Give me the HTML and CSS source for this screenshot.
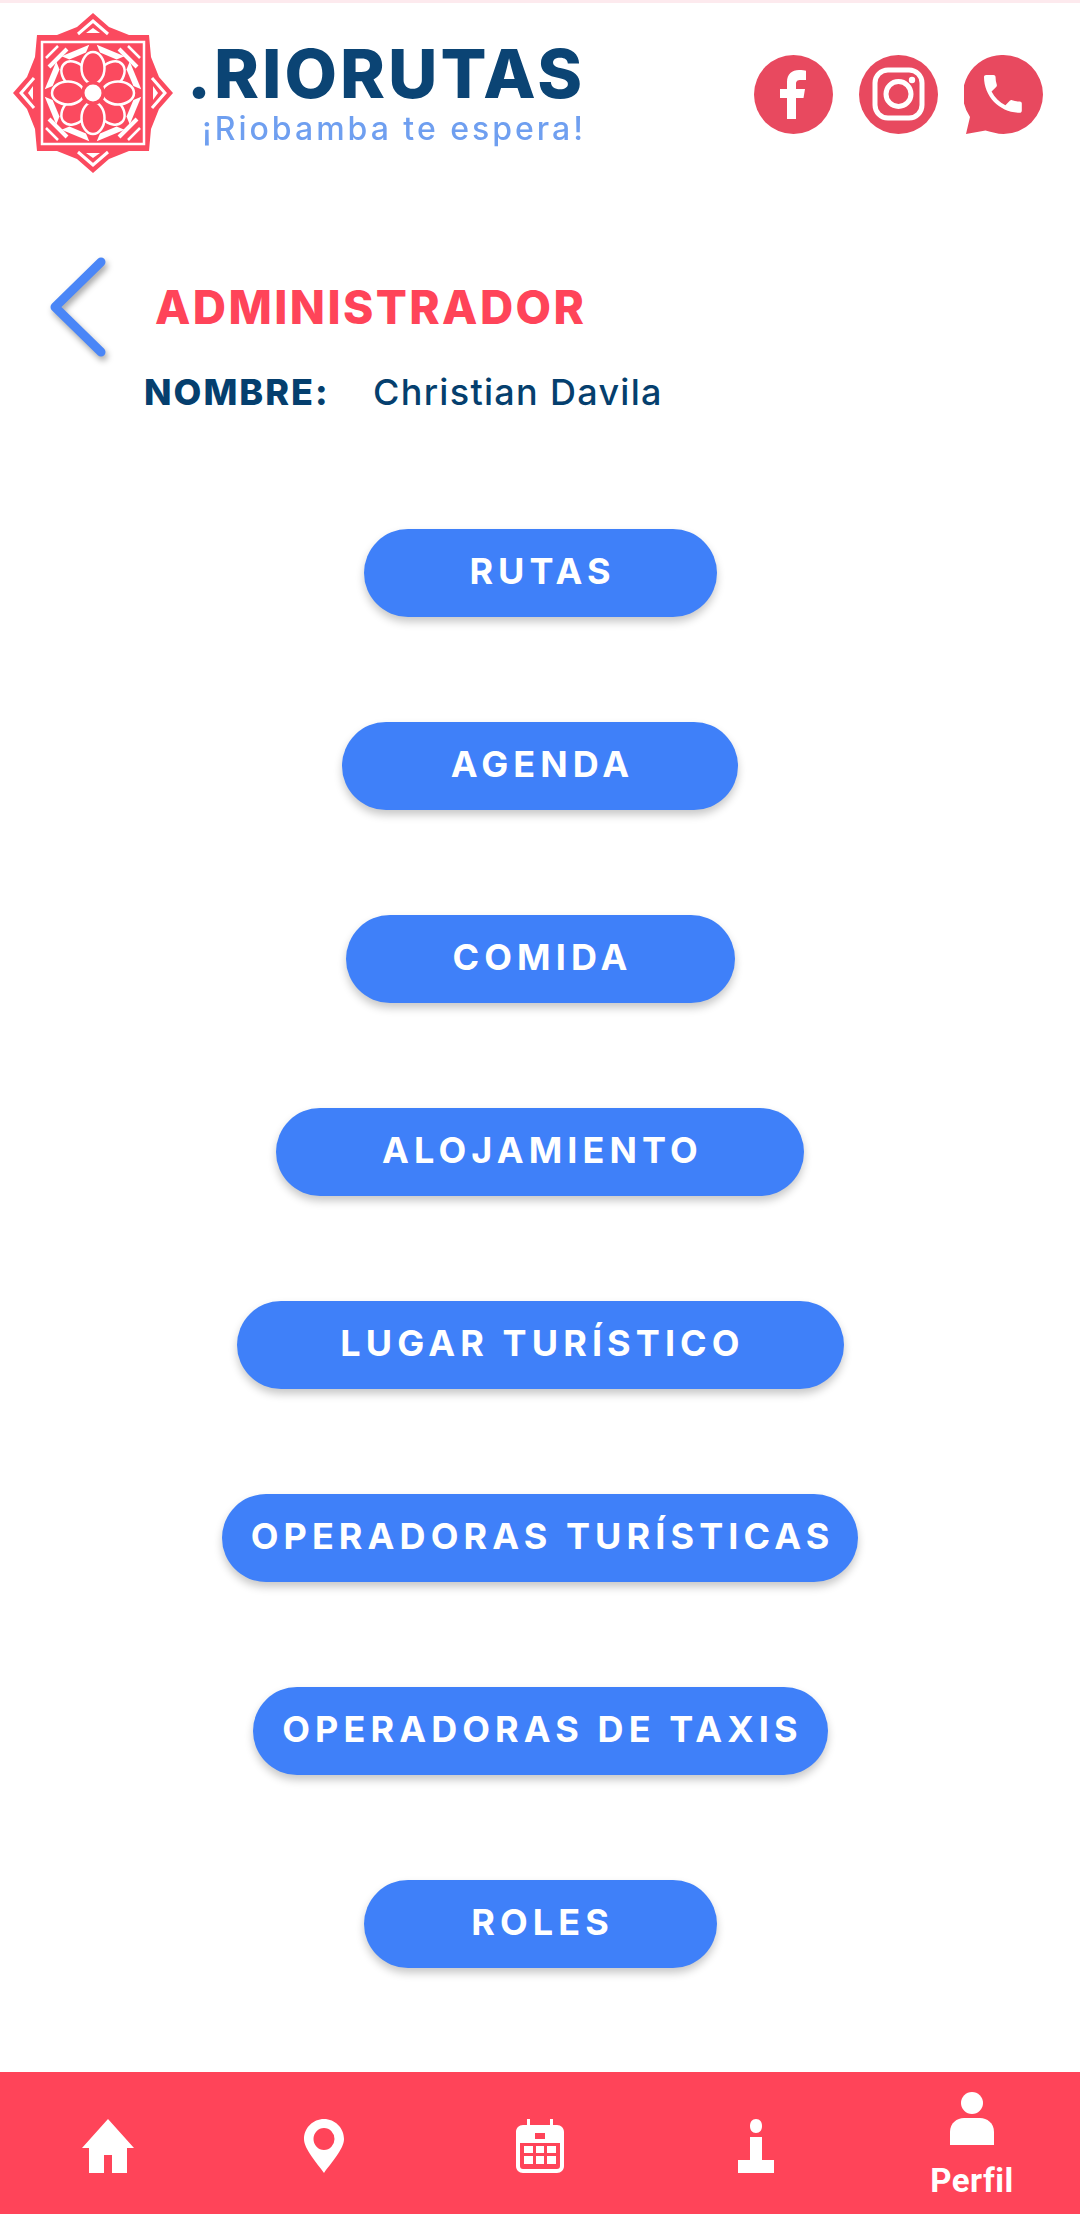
FILE: index.html
```html
<!DOCTYPE html>
<html lang="es">
<head>
<meta charset="utf-8">
<title>RioRutas</title>
<link rel="stylesheet" href="styles.css">
</head>
<body>
<div class="page">
  <header class="header">
    <div class="brand">
      <svg class="mark" viewBox="0 0 160 160" aria-hidden="true">
        <defs>
          <g id="tip">
            <path d="M-15 -59 0 -72 15 -59" fill="none" stroke="#fff" stroke-width="3"/>
            <path d="M-7 -60 0 -65 7 -60Z" fill="#fff"/>
          </g>
          <g id="corner">
            <path d="M-44 -26 -26 -44" stroke="#fff" stroke-width="4" fill="none"/>
            <path d="M-47 -35 -35 -47" stroke="#fff" stroke-width="2.5" fill="none"/>
          </g>
          <path id="gap" d="M-15 -46H15L9 -40H-9Z" fill="#fff"/>
          <ellipse id="petal" cx="0" cy="-25" rx="11.500" ry="16" fill="#fb4a5f" stroke="#fff" stroke-width="2.500"/>
        </defs>
        <g transform="translate(80 80)">
          <path fill="#fb4a5f" d="M0 -80 16 -66 36 -58 56 -58 58 -36 66 -16 80 0 66 16 58 36 56 58 36 58 16 66 0 80 -16 66 -36 58 -56 58 -58 36 -66 16 -80 0 -66 -16 -58 -36 -56 -58 -36 -58 -16 -66Z"/>
          <use href="#tip"/>
          <use href="#tip" transform="rotate(90)"/>
          <use href="#tip" transform="rotate(180)"/>
          <use href="#tip" transform="rotate(270)"/>
          <rect x="-56" y="-56" width="112" height="112" fill="#fb4a5f"/>
          <rect x="-51" y="-51" width="102" height="102" fill="none" stroke="#fff" stroke-width="2.500"/>
          <use href="#corner"/>
          <use href="#corner" transform="rotate(90)"/>
          <use href="#corner" transform="rotate(180)"/>
          <use href="#corner" transform="rotate(270)"/>
          <use href="#gap" transform="rotate(22.500)"/>
          <use href="#gap" transform="rotate(-22.500)"/>
          <use href="#gap" transform="rotate(67.500)"/>
          <use href="#gap" transform="rotate(-67.500)"/>
          <use href="#gap" transform="rotate(112.500)"/>
          <use href="#gap" transform="rotate(-112.500)"/>
          <use href="#gap" transform="rotate(157.500)"/>
          <use href="#gap" transform="rotate(-157.500)"/>
          <use href="#petal" transform="rotate(45)"/>
          <use href="#petal" transform="rotate(135)"/>
          <use href="#petal" transform="rotate(225)"/>
          <use href="#petal" transform="rotate(315)"/>
          <use href="#petal"/>
          <use href="#petal" transform="rotate(90)"/>
          <use href="#petal" transform="rotate(180)"/>
          <use href="#petal" transform="rotate(270)"/>
          <circle r="12" fill="#fb4a5f"/>
          <circle r="8.500" fill="#fff"/>
        </g>
      </svg>
      <div class="wordmark">
        <div class="brand-name">.RIORUTAS</div>
        <div class="brand-tag">¡Riobamba te espera!</div>
      </div>
    </div>
    <nav class="social">
      <svg class="social-icon" viewBox="0 0 79 79" aria-label="Facebook">
        <circle cx="39.5" cy="39.5" r="39.5" fill="#e8495f"/>
        <path fill="#fff" d="M33 64V43H26V34H33V27C33 19 38 15 45 15C48 15 51 15.5 52 15.7V25H47C43 25 42 26.5 42 29V34H51L49.5 43H42V64Z"/>
      </svg>
      <svg class="social-icon" viewBox="0 0 79 79" aria-label="Instagram">
        <circle cx="39.5" cy="39.5" r="39.5" fill="#e8495f"/>
        <rect x="16" y="15" width="47" height="48" rx="13" fill="none" stroke="#fff" stroke-width="5"/>
        <circle cx="39.5" cy="39" r="12.5" fill="none" stroke="#fff" stroke-width="5"/>
        <circle cx="53" cy="25" r="3.2" fill="#fff"/>
      </svg>
      <svg class="social-icon" viewBox="0 0 79 79" aria-label="WhatsApp">
        <path fill="#e8495f" d="M39.5 0A39.5 39.5 0 0 1 39.5 79C33 79 28 77 21.5 75.500L2 79 6 62A39.5 39.5 0 0 1 39.5 0Z"/>
        <path fill="#fff" transform="translate(13.700 13.700) scale(2.100)" d="M6.600 10.800c1.400 2.800 3.800 5.100 6.600 6.600l2.200-2.200c.3-.3.7-.4 1-.2 1.100.4 2.300.6 3.600.6.600 0 1 .4 1 1V20c0 .6-.4 1-1 1C10.600 21 3 13.400 3 4c0-.6.4-1 1-1h3.500c.6 0 1 .4 1 1 0 1.300.2 2.500.6 3.600.1.300 0 .7-.2 1l-2.300 2.200z"/>
      </svg>
    </nav>
  </header>

  <section class="title-row">
    <svg class="back" viewBox="0 0 60 100" aria-label="Volver">
      <path d="M52 5 6 50 52 95" fill="none" stroke="#4a86f7" stroke-width="9" stroke-linecap="round" stroke-linejoin="round"/>
    </svg>
    <h1 class="title">ADMINISTRADOR</h1>
  </section>
  <p class="name-row"><strong class="name-label">NOMBRE:</strong><span class="name-value">Christian Davila</span></p>

  <main class="menu">
    <a class="btn btn-rutas">RUTAS</a>
    <a class="btn btn-agenda">AGENDA</a>
    <a class="btn btn-comida">COMIDA</a>
    <a class="btn btn-aloja">ALOJAMIENTO</a>
    <a class="btn btn-lugar">LUGAR TURÍSTICO</a>
    <a class="btn btn-optur">OPERADORAS TURÍSTICAS</a>
    <a class="btn btn-optax">OPERADORAS DE TAXIS</a>
    <a class="btn btn-rutas">ROLES</a>
  </main>

  <footer class="tabbar">
    <div class="tab">
      <svg class="tab-icon home" viewBox="0 0 52 54"><path fill="#fff" d="M26 0 52 29H45V54H30V36H22V54H7V29H0Z"/></svg>
    </div>
    <div class="tab">
      <svg class="tab-icon pin" viewBox="0 0 40 54"><path fill="#fff" fill-rule="evenodd" d="M20 0C31 0 40 9 40 20 40 30 27 44 20 54 13 44 0 30 0 20 0 9 9 0 20 0ZM20 9A10.500 11 0 1 0 20 31 10.500 11 0 1 0 20 9Z"/></svg>
    </div>
    <div class="tab">
      <svg class="tab-icon cal" viewBox="0 0 48 54">
        <path fill="#fff" fill-rule="evenodd" d="M11 0H14V6H34V0H37V6H41C45 6 48 9 48 13V47C48 51 45 54 41 54H7C3 54 0 51 0 47V13C0 9 3 6 7 6H11ZM19 14V20H29V14ZM4 24V47C4 49 5 50 7 50H41C43 50 44 49 44 47V24Z"/>
        <path fill="#fff" d="M8 27h9v7H8zM20 27h8v7h-8zM31 27h9v7h-9zM8 37h9v8H8zM20 37h8v8h-8zM31 37h9v8h-9z"/>
      </svg>
    </div>
    <div class="tab">
      <svg class="tab-icon info" viewBox="0 0 36 54"><path fill="#fff" d="M18 0C22 0 24 3 24 7 24 11 22 14 18 14 14 14 12 11 12 7 12 3 14 0 18 0ZM12 18H24V41H36V54H0V41H12Z"/></svg>
    </div>
    <div class="tab tab-active">
      <svg class="tab-person" viewBox="0 0 44 53"><ellipse cx="22" cy="11" rx="11" ry="11" fill="#fff"/><path fill="#fff" d="M0 53V40C0 31 7 26 14 26H30C37 26 44 31 44 40V53Z"/></svg>
      <span class="tab-label">Perfil</span>
    </div>
  </footer>
</div>
</body>
</html>
```

FILE: styles.css
```css
* { box-sizing: border-box; }
html, body { margin: 0; padding: 0; background: #fff; }
.page {
  width: 1080px;
  height: 2214px;
  display: flex;
  flex-direction: column;
  border-top: 3px solid #fdeaee;
  font-family: Inter, "Liberation Sans", sans-serif;
  overflow: hidden;
}
.header {
  display: flex;
  align-items: flex-start;
  justify-content: space-between;
  padding: 10px 37px 0 13px;
}
.brand { display: flex; align-items: flex-start; gap: 14px; filter: blur(.5px); }
.mark { width: 160px; height: 160px; display: block; }
.wordmark { padding-top: 31px; }
.brand-name {
  font-size: 68px;
  line-height: 58px;
  font-weight: 800;
  color: #0b4474;
  letter-spacing: 3px;
  white-space: nowrap;
}
.brand-tag {
  margin: 9px 0 0 15px;
  font-size: 32px;
  line-height: 36px;
  font-weight: 500;
  color: #6f9ff0;
  letter-spacing: 3px;
  white-space: nowrap;
}
.social { display: flex; gap: 26px; padding-top: 42px; }
.social-icon { width: 79px; height: 79px; display: block; }

.title-row { display: flex; align-items: center; padding: 84px 0 0 49px; }
.back {
  width: 60px;
  height: 100px;
  display: block;
  filter: drop-shadow(2px 4px 3px rgba(0,0,0,.35));
}
.title {
  margin: 0 0 0 46px;
  font-size: 46px;
  line-height: 54px;
  font-weight: 800;
  letter-spacing: 2.400px;
  color: #ff4459;
  white-space: nowrap;
}
.name-row {
  margin: 0;
  padding: 13px 0 0 144px;
  display: flex;
  align-items: baseline;
  color: #053f6e;
  font-size: 36px;
  line-height: 44px;
}
.name-label { font-weight: 800; width: 229px; letter-spacing: 2px; }
.name-value { font-weight: 500; letter-spacing: 1.300px; }

.menu {
  display: flex;
  flex-direction: column;
  align-items: center;
  gap: 105px;
  padding-top: 115px;
}
.btn {
  display: flex;
  align-items: center;
  justify-content: center;
  height: 88px;
  padding: 0 0 4px 5px;
  border-radius: 44px;
  background: #3f80f9;
  color: #fff;
  font-size: 36px;
  font-weight: 700;
  letter-spacing: 5.100px;
  white-space: nowrap;
  box-shadow: 0 5px 9px rgba(0,0,0,.22);
}
.btn-rutas { width: 353px; }
.btn-agenda { width: 396px; }
.btn-comida { width: 389px; }
.btn-aloja { width: 528px; }
.btn-lugar { width: 607px; }
.btn-optur { width: 636px; }
.btn-optax { width: 575px; }

.tabbar {
  margin-top: auto;
  height: 142px;
  background: #ff4459;
  display: grid;
  grid-template-columns: repeat(5, 1fr);
}
.tab {
  display: flex;
  flex-direction: column;
  align-items: center;
  padding-top: 47px;
}
.tab-active { padding-top: 20px; }
.tab-icon { height: 54px; display: block; }
.home { width: 52px; }
.pin { width: 40px; }
.cal { width: 48px; }
.info { width: 36px; }
.tab-person { width: 44px; height: 53px; display: block; }
.tab-label {
  margin-top: 18px;
  font-family: Roboto, "Liberation Sans", sans-serif;
  font-size: 33px;
  line-height: 36px;
  font-weight: 700;
  letter-spacing: .5px;
  color: #fff;
}
```
